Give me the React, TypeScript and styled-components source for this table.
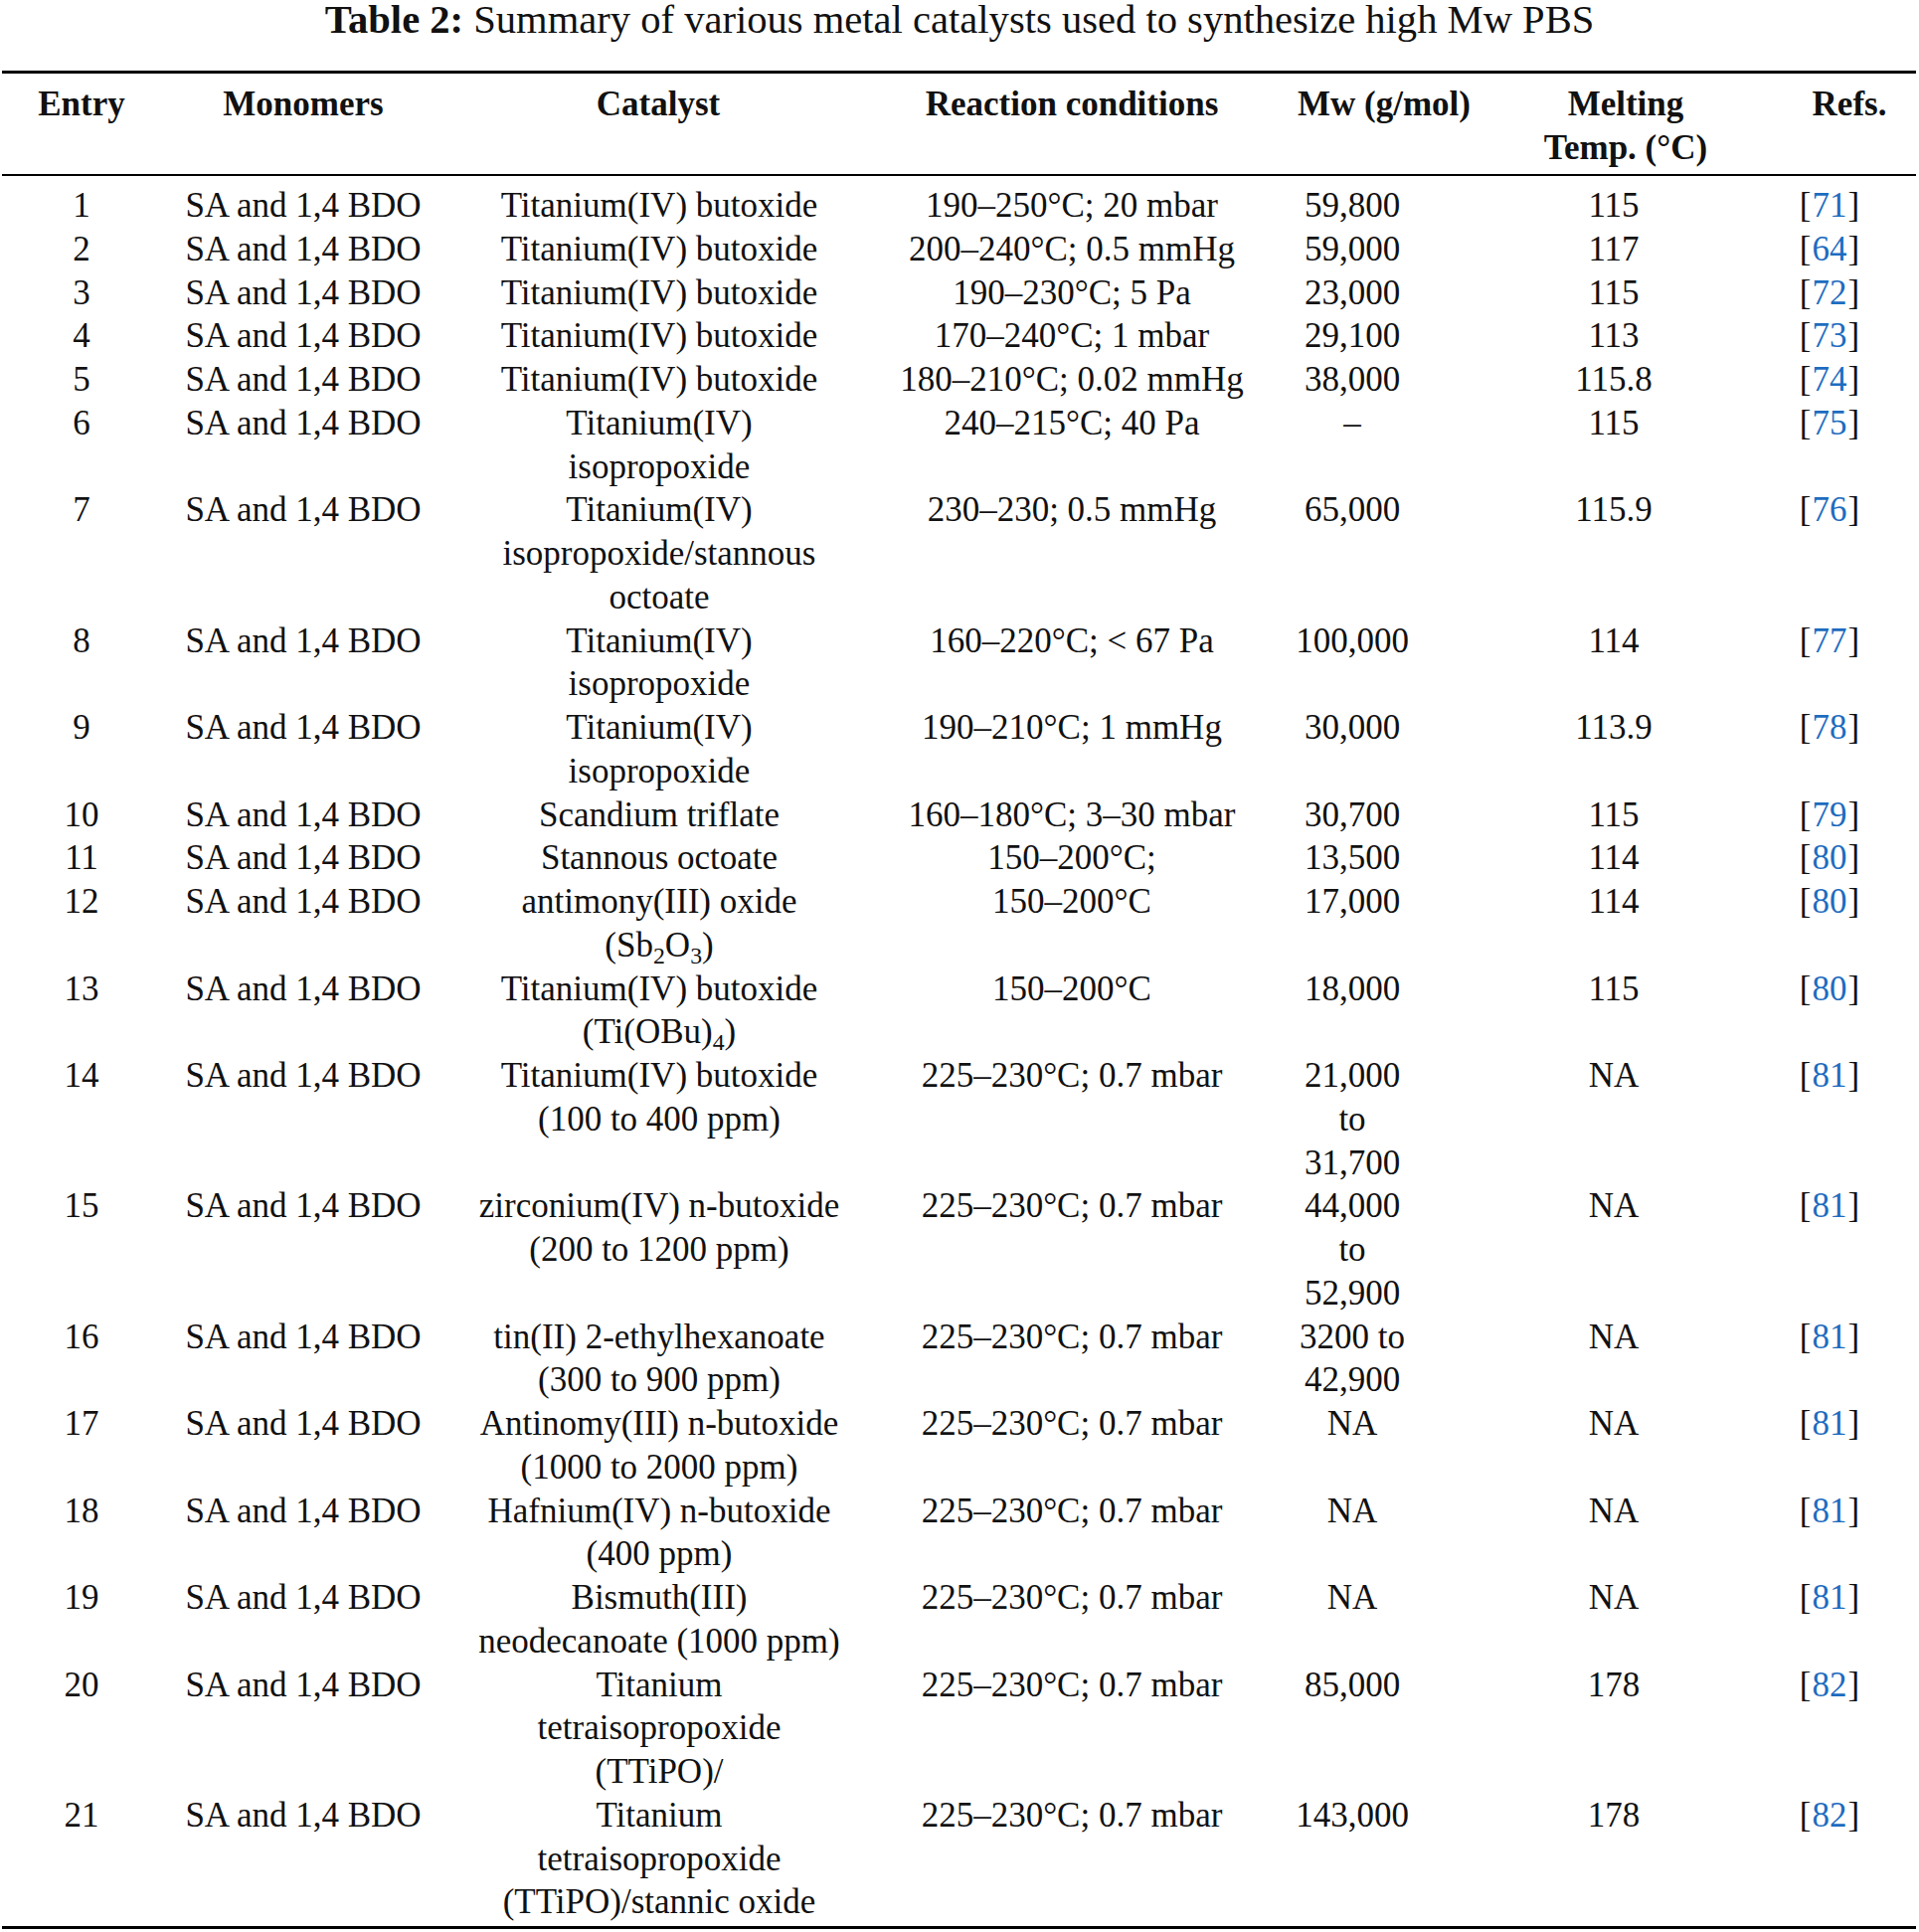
import React from "react";
import styled, { createGlobalStyle } from "styled-components";

const GlobalStyle = createGlobalStyle`
  html, body {
    margin: 0;
    padding: 0;
    background: #ffffff;
  }
  body {
    font-family: "Liberation Serif", "Times New Roman", serif;
    color: #111111;
  }
`;

const LH = "43.75px";

const Page = styled.div`
  width: 1930px;
  display: flex;
  flex-direction: column;
`;

const Caption = styled.div`
  font-size: 40.6px;
  line-height: 40px;
  text-align: center;
  white-space: nowrap;
  margin-bottom: 31px;
`;

const CaptionLabel = styled.span`
  font-weight: 700;
`;

const Table = styled.div`
  margin: 0 3px 0 2px;
  display: flex;
  flex-direction: column;
`;

const HeaderRow = styled.div`
  display: grid;
  grid-template-columns: 160px 286px 428px 404px 224px 262px 48px 92px 1fr;
  grid-template-areas: "entry mono cat cond mw melt . refs .";
  align-items: start;
  border-top: 3px solid #000;
  border-bottom: 2px solid #000;
  padding: 9px 0 4px;
  font-size: 35px;
  line-height: ${LH};
  font-weight: 700;
`;

const Body = styled.div`
  display: flex;
  flex-direction: column;
  padding: 8.5px 0 2px;
  border-bottom: 3px solid #000;
`;

const Row = styled.div`
  display: grid;
  grid-template-columns: 160px 286px 430px 400px 164px 362px 72px 1fr;
  grid-template-areas: "entry mono cat cond mw melt refs .";
  align-items: start;
  font-size: 35px;
  line-height: ${LH};
`;

const Cell = styled.div<{ $area: string }>`
  grid-area: ${(p) => p.$area};
  display: flex;
  flex-direction: column;
  align-items: center;
  text-align: center;
`;

const Line = styled.span`
  display: block;
  white-space: nowrap;
`;

const Sub = styled.sub`
  font-size: 0.68em;
  line-height: 0;
  vertical-align: -0.28em;
`;

const RefLink = styled.span`
  color: #1d6cc0;
  margin: 0 1px;
`;

type Lines = React.ReactNode[];

interface Entry {
  n: string;
  cat: Lines;
  cond: Lines;
  mw: Lines;
  temp: string;
  ref: string;
}

const COND = "225–230°C; 0.7 mbar";

const rows: Entry[] = [
  { n: "1", cat: ["Titanium(IV) butoxide"], cond: ["190–250°C; 20 mbar"], mw: ["59,800"], temp: "115", ref: "71" },
  { n: "2", cat: ["Titanium(IV) butoxide"], cond: ["200–240°C; 0.5 mmHg"], mw: ["59,000"], temp: "117", ref: "64" },
  { n: "3", cat: ["Titanium(IV) butoxide"], cond: ["190–230°C; 5 Pa"], mw: ["23,000"], temp: "115", ref: "72" },
  { n: "4", cat: ["Titanium(IV) butoxide"], cond: ["170–240°C; 1 mbar"], mw: ["29,100"], temp: "113", ref: "73" },
  { n: "5", cat: ["Titanium(IV) butoxide"], cond: ["180–210°C; 0.02 mmHg"], mw: ["38,000"], temp: "115.8", ref: "74" },
  { n: "6", cat: ["Titanium(IV)", "isopropoxide"], cond: ["240–215°C; 40 Pa"], mw: ["–"], temp: "115", ref: "75" },
  {
    n: "7",
    cat: ["Titanium(IV)", "isopropoxide/stannous", "octoate"],
    cond: ["230–230; 0.5 mmHg"],
    mw: ["65,000"],
    temp: "115.9",
    ref: "76",
  },
  { n: "8", cat: ["Titanium(IV)", "isopropoxide"], cond: ["160–220°C; < 67 Pa"], mw: ["100,000"], temp: "114", ref: "77" },
  { n: "9", cat: ["Titanium(IV)", "isopropoxide"], cond: ["190–210°C; 1 mmHg"], mw: ["30,000"], temp: "113.9", ref: "78" },
  { n: "10", cat: ["Scandium triflate"], cond: ["160–180°C; 3–30 mbar"], mw: ["30,700"], temp: "115", ref: "79" },
  { n: "11", cat: ["Stannous octoate"], cond: ["150–200°C;"], mw: ["13,500"], temp: "114", ref: "80" },
  {
    n: "12",
    cat: [
      "antimony(III) oxide",
      <>
        (Sb<Sub>2</Sub>O<Sub>3</Sub>)
      </>,
    ],
    cond: ["150–200°C"],
    mw: ["17,000"],
    temp: "114",
    ref: "80",
  },
  {
    n: "13",
    cat: [
      "Titanium(IV) butoxide",
      <>
        (Ti(OBu)<Sub>4</Sub>)
      </>,
    ],
    cond: ["150–200°C"],
    mw: ["18,000"],
    temp: "115",
    ref: "80",
  },
  {
    n: "14",
    cat: ["Titanium(IV) butoxide", "(100 to 400 ppm)"],
    cond: [COND],
    mw: ["21,000", "to", "31,700"],
    temp: "NA",
    ref: "81",
  },
  {
    n: "15",
    cat: ["zirconium(IV) n-butoxide", "(200 to 1200 ppm)"],
    cond: [COND],
    mw: ["44,000", "to", "52,900"],
    temp: "NA",
    ref: "81",
  },
  {
    n: "16",
    cat: ["tin(II) 2-ethylhexanoate", "(300 to 900 ppm)"],
    cond: [COND],
    mw: ["3200 to", "42,900"],
    temp: "NA",
    ref: "81",
  },
  {
    n: "17",
    cat: ["Antinomy(III) n-butoxide", "(1000 to 2000 ppm)"],
    cond: [COND],
    mw: ["NA"],
    temp: "NA",
    ref: "81",
  },
  {
    n: "18",
    cat: ["Hafnium(IV) n-butoxide", "(400 ppm)"],
    cond: [COND],
    mw: ["NA"],
    temp: "NA",
    ref: "81",
  },
  {
    n: "19",
    cat: ["Bismuth(III)", "neodecanoate (1000 ppm)"],
    cond: [COND],
    mw: ["NA"],
    temp: "NA",
    ref: "81",
  },
  {
    n: "20",
    cat: ["Titanium", "tetraisopropoxide", "(TTiPO)/"],
    cond: [COND],
    mw: ["85,000"],
    temp: "178",
    ref: "82",
  },
  {
    n: "21",
    cat: ["Titanium", "tetraisopropoxide", "(TTiPO)/stannic oxide"],
    cond: [COND],
    mw: ["143,000"],
    temp: "178",
    ref: "82",
  },
];

const MultiLine: React.FC<{ area: string; lines: Lines }> = ({ area, lines }) => (
  <Cell $area={area}>
    {lines.map((l, i) => (
      <Line key={i}>{l}</Line>
    ))}
  </Cell>
);

export default function App() {
  return (
    <>
      <GlobalStyle />
      <Page>
        <Caption>
          <CaptionLabel>Table 2:</CaptionLabel> Summary of various metal catalysts used to synthesize high Mw PBS
        </Caption>
        <Table>
          <HeaderRow>
            <MultiLine area="entry" lines={["Entry"]} />
            <MultiLine area="mono" lines={["Monomers"]} />
            <MultiLine area="cat" lines={["Catalyst"]} />
            <MultiLine area="cond" lines={["Reaction conditions"]} />
            <MultiLine area="mw" lines={["Mw (g/mol)"]} />
            <MultiLine area="melt" lines={["Melting", "Temp. (°C)"]} />
            <MultiLine area="refs" lines={["Refs."]} />
          </HeaderRow>
          <Body>
            {rows.map((r) => (
              <Row key={r.n}>
                <MultiLine area="entry" lines={[r.n]} />
                <MultiLine area="mono" lines={["SA and 1,4 BDO"]} />
                <MultiLine area="cat" lines={r.cat} />
                <MultiLine area="cond" lines={r.cond} />
                <MultiLine area="mw" lines={r.mw} />
                <MultiLine area="melt" lines={[r.temp]} />
                <MultiLine
                  area="refs"
                  lines={[
                    <>
                      [<RefLink>{r.ref}</RefLink>]
                    </>,
                  ]}
                />
              </Row>
            ))}
          </Body>
        </Table>
      </Page>
    </>
  );
}
